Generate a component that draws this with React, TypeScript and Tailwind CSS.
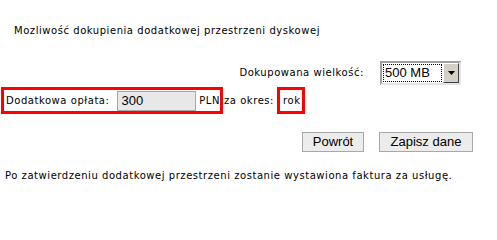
import React from "react";

export default function App() {
  return (
    <div
      className="w-[497px] h-[201px] bg-white text-black text-[10px] leading-[12px] tracking-[0.55px] overflow-hidden"
      style={{ fontFamily: '"DejaVu Sans", Verdana, sans-serif' }}
    >
      <div className="pl-[14px] pt-[25px] h-[37px]">Mozliwość dokupienia dodatkowej przestrzeni dyskowej</div>

      <div className="mt-[24px] flex items-center justify-end pr-[36px] h-[24px]">
        <span className="mr-[16px]">Dokupowana wielkość:</span>
        <div className="w-[81px] h-[24px] flex border-2 border-t-[#a0a0a0] border-l-[#a0a0a0] border-b-[#e4e4e4] border-r-[#e4e4e4] bg-[#d4d0c8] tracking-normal">
          <div className="flex-1 bg-white p-[1px]">
            <div
              className="h-full border border-dotted border-black flex items-center pl-[1px] text-[13px] leading-[16px]"
              style={{ fontFamily: '"Liberation Sans", Arial, sans-serif' }}
            >
              500 MB
            </div>
          </div>
          <div className="w-[16px] h-full flex items-center justify-center bg-[#d4d0c8] border border-t-white border-l-white border-b-[#404040] border-r-[#404040]">
            <svg width="7" height="4" viewBox="0 0 7 4">
              <polygon points="0,0 7,0 3.5,4" fill="#000" />
            </svg>
          </div>
        </div>
      </div>

      <div className="mt-[2px] flex items-center h-[27px]">
        <div className="ml-[1px] w-[222px] h-[27px] border-[3px] border-[#ff0000] flex items-center pl-[2px]">
          <span className="w-[111px] whitespace-nowrap">Dodatkowa opłata:</span>
          <div
            className="w-[80px] h-[20px] border border-[#a8a8a8] bg-[#e8e8e8] flex items-center pl-[4px] text-[13px] leading-[16px] tracking-normal"
            style={{ fontFamily: '"Liberation Sans", Arial, sans-serif' }}
          >
            300
          </div>
          <span className="ml-[3px]">PLN</span>
        </div>
        <span className="ml-[1px] whitespace-nowrap">za okres:</span>
        <div className="ml-[3px] w-[28px] h-[27px] border-[3px] border-[#ff0000] flex items-center pl-[3px]">
          rok
        </div>
      </div>

      <div
        className="mt-[18px] flex justify-end pr-[24px] gap-[15px] h-[20px] text-[13px] leading-[16px] tracking-normal"
        style={{ fontFamily: '"Liberation Sans", Arial, sans-serif' }}
      >
        <button className="w-[62px] h-[20px] border border-[#a8a8a8] bg-[#ececec] flex items-center justify-center">
          Powrót
        </button>
        <button className="w-[94px] h-[20px] border border-[#a8a8a8] bg-[#ececec] flex items-center justify-center">
          Zapisz dane
        </button>
      </div>

      <div className="mt-[18px] pl-[5px] whitespace-nowrap">Po zatwierdzeniu dodatkowej przestrzeni zostanie wystawiona faktura za usługę.</div>
    </div>
  );
}
